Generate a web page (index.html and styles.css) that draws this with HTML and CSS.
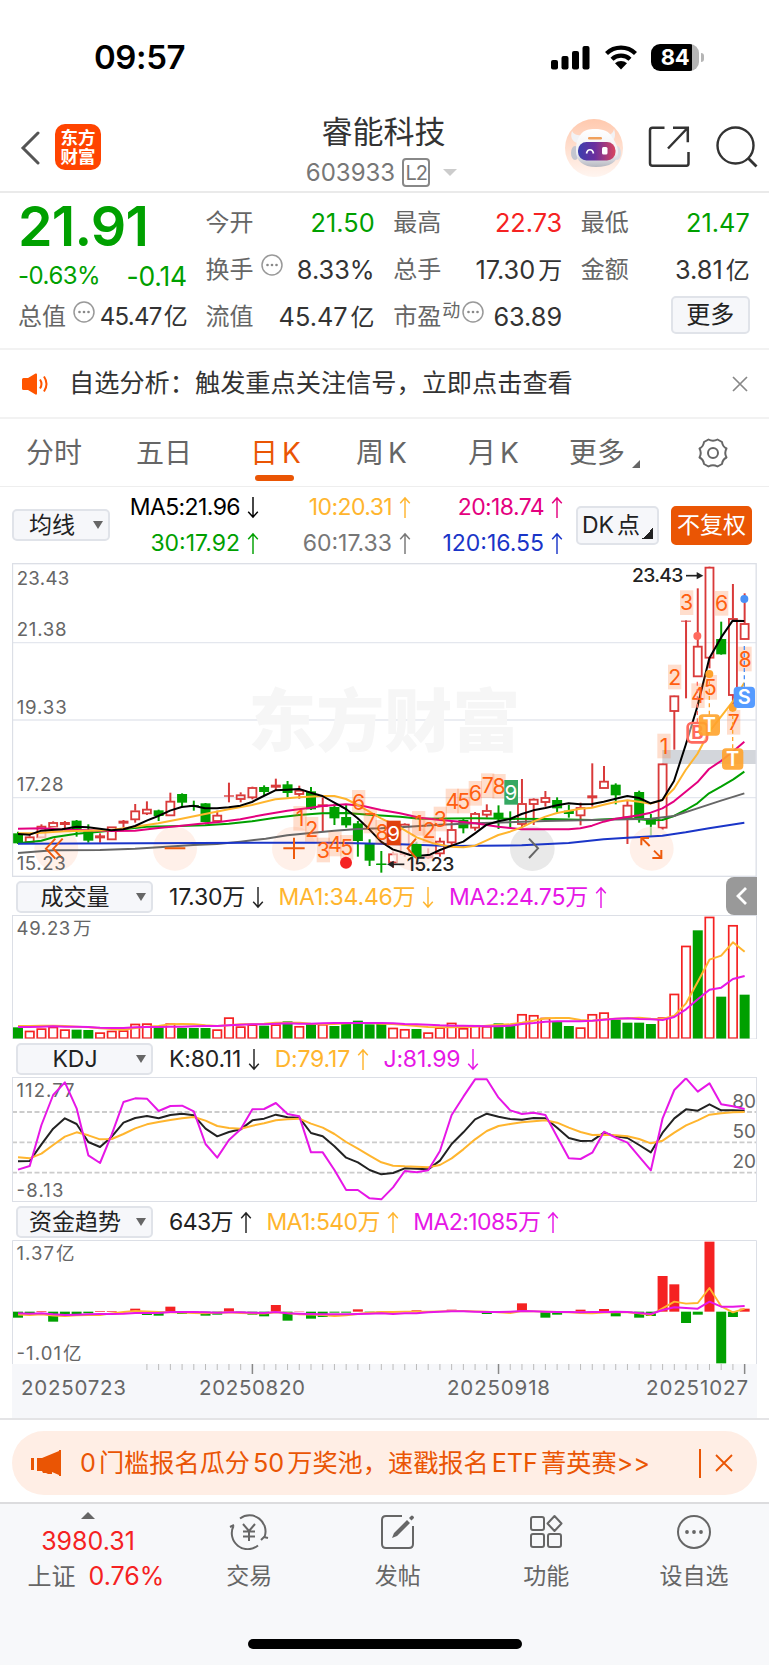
FILE: index.html
```
<!DOCTYPE html>
<html lang="zh-CN">
<head>
  <meta charset="UTF-8" />
  <meta name="viewport" content="width=device-width, initial-scale=1.0" />
  <title>睿能科技 603933</title>
  <link rel="stylesheet" href="styles.css">
</head>
<body>
  <svg class="defs" width="0" height="0">
    <symbol id="up" viewBox="0 0 12 24"><path d="M6 23V2M1 7.500 6 2l5 5.500" fill="none" stroke="currentColor" stroke-width="1.500"/></symbol>
    <symbol id="down" viewBox="0 0 12 24"><path d="M6 1v21M1 16.500 6 22l5-5.500" fill="none" stroke="currentColor" stroke-width="1.500"/></symbol>
    <symbol id="dots" viewBox="0 0 22 22"><circle cx="11" cy="11" r="10" fill="none" stroke="#999" stroke-width="1.500"/><g fill="#888"><circle cx="6.500" cy="11" r="1.300"/><circle cx="11" cy="11" r="1.300"/><circle cx="15.500" cy="11" r="1.300"/></g></symbol>
  </svg>

  <div class="status">
    <span class="time">09:57</span>
    <div class="status-icons">
      <svg width="39" height="25" viewBox="0 0 39 25"><rect x="0" y="15" width="7" height="9.500" rx="2"/><rect x="10.500" y="11" width="7" height="13.500" rx="2"/><rect x="21" y="6" width="7" height="18.500" rx="2"/><rect x="31.500" y="1" width="7" height="23.500" rx="2"/></svg>
      <svg class="wifi" width="34" height="25" viewBox="0 0 34 25"><path d="M2.500 8.500a21 21 0 0 1 29 0M8 14.300a13 13 0 0 1 18 0" fill="none" stroke="#000" stroke-width="4.300"/><path d="M11 18.300a8.700 8.700 0 0 1 12 0l-6 6.200z"/></svg>
      <div class="battery"><span>84</span></div>
      <i class="battery-tip"></i>
    </div>
  </div>

  <header class="nav">
    <svg class="back" width="20" height="34" viewBox="0 0 20 34"><path d="M18 2 3 17l15 15" fill="none" stroke="#555" stroke-width="3" stroke-linecap="round"/></svg>
    <div class="logo"><span>东方</span><span>财富</span></div>
    <div class="title">
      <h1>睿能科技</h1>
      <div class="code"><span>603933</span><b>L2</b><i></i></div>
    </div>
    <svg class="robot" width="58" height="58" viewBox="0 0 58 58">
      <defs>
        <linearGradient id="bg" x1="0" y1="0" x2="0" y2="1"><stop offset="0" stop-color="#ffc9ae"/><stop offset="1" stop-color="#fff5f0"/></linearGradient>
        <linearGradient id="face" x1="0" y1="0" x2="1" y2="0"><stop offset="0" stop-color="#3a3fae"/><stop offset=".45" stop-color="#6a2e9e"/><stop offset="1" stop-color="#d9455e"/></linearGradient>
        <linearGradient id="head" x1="0" y1="0" x2="0" y2="1"><stop offset="0" stop-color="#fff"/><stop offset=".65" stop-color="#efeff2"/><stop offset="1" stop-color="#b5b7c0"/></linearGradient>
      </defs>
      <circle cx="29" cy="29" r="29" fill="url(#bg)"/>
      <ellipse cx="10" cy="34" rx="4" ry="7" fill="#c4c6cf"/><ellipse cx="52" cy="34" rx="4" ry="7" fill="#dcdde3"/>
      <path d="M7 12c-2 6 0 10 5 12l6-8c-5 1-9 0-11-4zM49 10c2 6 1 11-3 13l-6-7c5 0 8-1 9-6z" fill="#f2f2f5"/>
      <path d="M11 32c0-7 1-12 5-17 3-4 8-5 14-5 8 0 14 2 17 8 3 5 6 9 6 15 0 10-8 15-22 15-13 0-20-6-20-16z" fill="url(#head)"/>
      <rect x="23" y="18" width="14" height="2.500" rx="1.200" fill="#f0a05c"/>
      <rect x="13" y="23" width="37.500" height="18.500" rx="8.500" fill="url(#face)"/>
      <path d="M21.500 34.500c1-5 6-5 7 0" fill="none" stroke="#fff" stroke-width="1.700"/><rect x="37" y="28" width="5.500" height="7.500" rx="1.500" fill="#fff"/>
    </svg>
    <svg class="share" width="42" height="42" viewBox="0 0 42 42"><path d="M16.500 1.800H4.500Q2 1.800 2 4.300v33q0 2.500 2.500 2.500h34q2 0 2-2.500V26M25 1.800h14.800v14.500M39.500 2 20 22.500" fill="none" stroke="#333" stroke-width="2.500"/></svg>
    <svg width="42" height="42" viewBox="0 0 42 42"><circle cx="19.500" cy="19.500" r="18" fill="none" stroke="#333" stroke-width="2.400"/><path d="m32 32 8.500 8.500" stroke="#333" stroke-width="2.800"/></svg>
  </header>

  <section class="quote">
    <div class="price">
      <strong class="green">21.91</strong>
      <div class="change green"><span>-0.63%</span><b>-0.14</b></div>
    </div>
    <div class="cell"><label>今开</label><span class="green">21.50</span></div>
    <div class="cell"><label>最高</label><span class="red">22.73</span></div>
    <div class="cell"><label>最低</label><span class="green">21.47</span></div>
    <div class="cell"><label>换手<svg class="info"><use href="#dots"/></svg></label><span>8.33%</span></div>
    <div class="cell"><label>总手</label><span>17.30<em>万</em></span></div>
    <div class="cell"><label>金额</label><span>3.81<em>亿</em></span></div>
    <div class="cell narrow"><label>总值<svg class="info"><use href="#dots"/></svg></label><span>45.47<em>亿</em></span></div>
    <div class="cell"><label>流值</label><span>45.47<em>亿</em></span></div>
    <div class="cell"><label>市盈<sup>动</sup><svg class="info tight"><use href="#dots"/></svg></label><span>63.89</span></div>
    <div class="cell end"><button class="more">更多</button></div>
  </section>

  <div class="notice">
    <svg width="27" height="22" viewBox="0 0 27 22"><path d="M0 6.500Q0 5 1.500 5H6l7.500-4.500Q15 0 15 1.500v19q0 1.500-1.500 1L6 17H1.500Q0 17 0 15.500z" fill="#ff5500"/><path d="M18 6.500q3 4.500 0 9M22 3.500q5 7.500 0 15" fill="none" stroke="#ff5500" stroke-width="2"/></svg>
    <p>自选分析：触发重点关注信号，立即点击查看</p>
    <svg width="16" height="16" viewBox="0 0 16 16"><path d="m1 1 14 14M15 1 1 15" stroke="#888" stroke-width="1.700"/></svg>
  </div>

  <nav class="tabs">
    <span>分时</span>
    <span>五日</span>
    <span class="active">日<b>K</b></span>
    <span>周<b>K</b></span>
    <span>月<b>K</b></span>
    <span class="corner">更多</span>
    <svg width="32" height="32" viewBox="0 0 32 32"><path d="M11.500 2.500Q16 5 20.500 2.500L25 5Q25.500 9.500 29.500 11.500Q27 16 29.500 20.500Q25.500 22.500 25 27L20.500 29.500Q16 27 11.500 29.500L7 27Q6.500 22.500 2.500 20.500Q5 16 2.500 11.500Q6.500 9.500 7 5Z" fill="none" stroke="#666" stroke-width="2" stroke-linejoin="round"/><circle cx="16" cy="16" r="5" fill="none" stroke="#666" stroke-width="2"/></svg>
  </nav>

  <div class="ma-row">
    <button class="select small">均线<i></i></button>
    <div class="ma-grid">
      <span class="black">MA5:21.96<svg><use href="#down"/></svg></span>
      <span class="yellow">10:20.31<svg><use href="#up"/></svg></span>
      <span class="pink">20:18.74<svg><use href="#up"/></svg></span>
      <span class="green wide">30:17.92<svg><use href="#up"/></svg></span>
      <span class="gray wide">60:17.33<svg><use href="#up"/></svg></span>
      <span class="blue wide">120:16.55<svg><use href="#up"/></svg></span>
    </div>
    <button class="dk">DK<em>点</em></button>
    <button class="fq">不复权</button>
  </div>

  <main class="charts">
    <!-- price chart is drawn on a 3x grid -->
    <svg id="kline" class="chart" width="746" height="314" viewBox="36 9 2238 942"></svg>
    <div class="bar">
      <button class="select"><span>成交量</span><i></i></button>
      <span class="dark">17.30万<svg><use href="#down"/></svg></span>
      <span class="yellow">MA1:34.46万<svg><use href="#down"/></svg></span>
      <span class="magenta">MA2:24.75万<svg><use href="#up"/></svg></span>
      <div class="side"><svg width="12" height="20" viewBox="0 0 12 20"><path d="m10 2-8 8 8 8" fill="none" stroke="#fff" stroke-width="2.800"/></svg></div>
    </div>
    <svg id="volume" class="chart" width="746" height="124" viewBox="12 915 746 124"></svg>
    <div class="bar">
      <button class="select"><span>KDJ</span><i></i></button>
      <span class="dark">K:80.11<svg><use href="#down"/></svg></span>
      <span class="yellow">D:79.17<svg><use href="#up"/></svg></span>
      <span class="magenta">J:81.99<svg><use href="#down"/></svg></span>
    </div>
    <svg id="kdj" class="chart" width="746" height="125" viewBox="12 1077 746 125"></svg>
    <div class="bar fund-bar">
      <button class="select"><span>资金趋势</span><i></i></button>
      <span class="dark">643万<svg><use href="#up"/></svg></span>
      <span class="yellow">MA1:540万<svg><use href="#up"/></svg></span>
      <span class="magenta">MA2:1085万<svg><use href="#up"/></svg></span>
    </div>
    <svg id="fund" class="chart" width="746" height="178" viewBox="12 1240 746 178"></svg>
  </main>

  <div class="promo-wrap">
    <div class="promo">
      <svg width="30" height="26" viewBox="0 0 30 26"><path d="M0 8h3v12H0zM6 8h5L28 1V0h2v26h-2v-1l-7-3v2h-3l-1 0-2-1-3 0-1-2H6z" fill="#ea5504"/></svg>
      <p>0<em>门槛报名瓜分</em>50<em>万奖池，速戳报名</em>ETF<em class="last">菁英赛</em>&gt;&gt;</p>
      <i></i>
      <svg width="18" height="18" viewBox="0 0 18 18"><path d="m1 1 16 16M17 1 1 17" stroke="#ea5504" stroke-width="1.800"/></svg>
    </div>
  </div>

  <footer class="toolbar">
    <div class="items">
      <div class="index">
        <i></i>
        <span class="red">3980.31</span>
        <p>上证<b class="red">0.76%</b></p>
      </div>
      <div class="item">
        <svg width="40" height="36" viewBox="0 0 40 36"><g fill="none" stroke="#666" stroke-width="2"><path d="M11 4.500A16 16 0 0 1 35.500 23M32 26l3-3 4 1M29 31.500A16 16 0 0 1 4.500 12M1 13l4-2 0 0"/><path d="m14 10 6 7 6-7M20 17v10M14 17.500h12M14 22.500h12"/></g></svg>
        <span>交易</span>
      </div>
      <div class="item">
        <svg width="40" height="36" viewBox="0 0 40 36"><path d="M24 2H8Q4 2 4 6v24q0 4 4 4h23q4 0 4-4V12" fill="none" stroke="#666" stroke-width="2"/><path d="m29 6 3 3-13 13-5 2 2-5zM31 4l2-2q1-1 2.300.300T35.500 4.600l-2 2z" fill="#666"/></svg>
        <span>发帖</span>
      </div>
      <div class="item">
        <svg width="40" height="36" viewBox="0 0 40 36"><g fill="none" stroke="#666" stroke-width="2"><rect x="5" y="3" width="13" height="13" rx="2"/><rect x="5" y="20" width="13" height="13" rx="2"/><rect x="22" y="20" width="13" height="13" rx="2"/><path d="m28.500 2 7 7.500-7 7.500-7-7.500z" stroke-linejoin="round"/></g></svg>
        <span>功能</span>
      </div>
      <div class="item">
        <svg width="40" height="36" viewBox="0 0 40 36"><circle cx="20" cy="18" r="16" fill="none" stroke="#666" stroke-width="2"/><g fill="#666"><circle cx="13" cy="18" r="1.900"/><circle cx="20" cy="18" r="1.900"/><circle cx="27" cy="18" r="1.900"/></g></svg>
        <span>设自选</span>
      </div>
    </div>
    <div class="home"></div>
  </footer>

  <script src="chart.js"></script>
</body>
</html>
```
FILE: styles.css
```
* {
  box-sizing: border-box;
}
body {
  margin: 0;
  width: 769px;
  height: 1665px;
  overflow: hidden;
  background: #fff;
  color: #333;
  font-family: Inter, "Noto Sans CJK SC", sans-serif;
  line-height: 1;
}
button {
  font-family: inherit;
  padding: 0;
  color: #222;
  background: #f6f7fa;
  border: 2px solid #e0e3e9;
  border-radius: 5px;
}
h1, p {
  margin: 0;
  font-weight: 400;
}
em, i {
  font-style: normal;
}
svg {
  display: block;
  flex: none;
}
.defs {
  position: absolute;
}
.green { color: #00a000; }
.red { color: #f52222; }
.black { color: #000; }
.dark { color: #222; }
.gray { color: #777; }
.yellow { color: #ffb52e; }
.pink { color: #e4007f; }
.blue { color: #1a35c8; }
.magenta { color: #e617e6; }

/* status bar */
.status {
  height: 85px;
  padding: 29px 65px 0 94px;
  display: flex;
  justify-content: space-between;
  align-items: center;
}
.time {
  color: #000;
  font-size: 33px;
  font-weight: 600;
  letter-spacing: -0.4px;
}
.status-icons {
  display: flex;
  align-items: center;
}
.wifi {
  margin: 0 13px 0 14px;
}
.battery {
  width: 48px;
  height: 27px;
  border-radius: 9px;
  background: linear-gradient(90deg, #000 41px, #b5b5b5 41px);
  color: #fff;
  font-size: 22px;
  font-weight: 700;
  line-height: 27px;
  text-align: center;
  letter-spacing: -0.3px;
}
.battery-tip {
  width: 3px;
  height: 9px;
  margin-left: 2px;
  border-radius: 0 4px 4px 0;
  background: #b5b5b5;
}

/* navigation */
.nav {
  height: 108px;
  padding: 0 11px 0 20px;
  display: flex;
  align-items: center;
  border-bottom: 2px solid #eaeaea;
}
.back {
  margin-top: 19px;
}
.logo {
  width: 46px;
  height: 46px;
  margin: 18px 0 0 15px;
  border-radius: 10px;
  background: #ff4400;
  color: #fff;
  font-size: 17.5px;
  font-weight: 700;
  display: flex;
  flex-direction: column;
  align-items: center;
  justify-content: center;
  gap: 2px;
}
.title {
  flex: 1;
  padding: 27px 0 0 101px;
  display: flex;
  flex-direction: column;
  align-items: center;
}
.title h1 {
  font-size: 31px;
  line-height: 40px;
}
.code {
  height: 38px;
  display: flex;
  align-items: center;
  color: #777;
  font-size: 24px;
  margin-top: 2px;
  margin-left: -4px;
}
.code b {
  width: 28px;
  height: 29px;
  margin: 0 13px 0 7px;
  border: 2px solid #888;
  border-radius: 4px;
  font-size: 20px;
  font-weight: 400;
  line-height: 26px;
  text-align: center;
  letter-spacing: -1px;
}
.code i {
  border: 7px solid transparent;
  border-top-color: #ccc;
  border-bottom: 0;
}
.robot {
  margin: 19px 25px 0 0;
}
.share, .share + svg {
  margin-top: 18px;
}
.share {
  margin-right: 26px;
}

/* quote */
.quote {
  height: 157px;
  padding: 6px 19px 0 18px;
  display: grid;
  grid-template-columns: repeat(4, 169px);
  grid-template-rows: repeat(3, 47px);
  column-gap: 18.600px;
  border-bottom: 2px solid #f2f2f2;
}
.price {
  grid-row: span 2;
}
.price strong {
  display: block;
  font-size: 55.5px;
  font-weight: 600;
  line-height: 54px;
  letter-spacing: -0.8px;
}
.change {
  display: flex;
  justify-content: space-between;
  margin-top: 5px;
  font-size: 24px;
  line-height: 36px;
  letter-spacing: -0.5px;
}
.change b {
  font-size: 26.5px;
  font-weight: 400;
  letter-spacing: -0.2px;
}
.cell {
  display: flex;
  justify-content: space-between;
  align-items: center;
  white-space: nowrap;
  font-size: 25.3px;
}
.cell label {
  display: flex;
  align-items: center;
  color: #666;
  font-size: 24px;
  letter-spacing: 0;
}
.cell em {
  margin-left: 3px;
  font-size: 24px;
}
.narrow {
  font-size: 24px;
  letter-spacing: -0.7px;
}
.narrow em {
  margin-left: 2px;
}
.cell sup {
  font-size: 18px;
  margin: -12px 0 0 1px;
}
.info {
  width: 22px;
  height: 22px;
  margin: -10px 0 0 7px;
}
.info.tight {
  margin-left: 2px;
}
.end {
  justify-content: flex-end;
}
.more {
  width: 79px;
  height: 38px;
  margin-top: -3px;
  font-size: 24px;
  line-height: 30px;
}

/* notice */
.notice {
  height: 69px;
  padding: 0 21px 0 22px;
  display: flex;
  align-items: center;
  border-bottom: 2px solid #f2f2f2;
}
.notice p {
  flex: 1;
  padding-left: 20px;
  font-size: 25.2px;
}

/* period tabs */
.tabs {
  height: 68px;
  padding-left: 26px;
  display: grid;
  grid-template-columns: 110px 114px 106px 112px 101px 128px 32px;
  align-items: center;
  border-bottom: 1px solid #eee;
  color: #666;
  font-size: 28px;
}
.tabs b {
  font-weight: 400;
  margin-left: 4px;
}
.active {
  position: relative;
  color: #ea5504;
}
.active::after {
  content: "";
  position: absolute;
  left: 5px;
  bottom: -14px;
  width: 39px;
  height: 6px;
  border-radius: 3px;
  background: #ea5504;
}
.corner {
  display: flex;
  align-items: flex-end;
}
.corner::after {
  content: "";
  margin: 0 0 -1px 7px;
  border: 4px solid;
  border-color: transparent #666 #666 transparent;
}

/* moving averages */
.ma-row {
  height: 76px;
  padding-left: 12px;
  display: flex;
  align-items: center;
}
.select {
  width: 137px;
  height: 32px;
  padding: 0 5px 0 10px;
  display: flex;
  align-items: center;
  font-size: 23px;
  line-height: 28px;
}
.select i {
  margin-left: auto;
  border: 5px solid transparent;
  border-top: 8px solid #666;
  border-bottom: 0;
}
.select.small {
  width: 98px;
  padding-left: 15px;
}
.ma-grid {
  width: 453px;
  display: grid;
  grid-template-columns: 149px 152px 152px;
  row-gap: 13px;
  font-size: 23px;
  letter-spacing: -0.6px;
}
.ma-grid .wide {
  letter-spacing: 0;
}
.ma-grid span {
  display: flex;
  justify-content: flex-end;
  align-items: center;
}
.ma-grid svg, .bar > span svg {
  width: 12px;
  height: 23px;
  margin-left: 7px;
}
.dk, .fq {
  height: 39px;
  font-size: 23px;
  line-height: 30px;
}
.dk {
  width: 83px;
  margin-left: 13px;
  padding-right: 13px;
  background: linear-gradient(135deg, transparent 50%, #222 50%) right 4px bottom 4px / 11px 11px no-repeat #f6f7fa;
}
.dk em {
  margin-left: 3px;
}
.fq {
  width: 81px;
  margin-left: 12px;
  background: #ea5504;
  border-color: #ea5504;
  color: #fff;
}

/* charts */
.charts {
  padding-left: 12px;
}
.chart text {
  white-space: pre;
}
.bar {
  height: 38px;
  padding: 2px 0 0 4px;
  display: flex;
  align-items: center;
  width: 745px;
  font-size: 23px;
}
.bar .select {
  margin-right: 16px;
}
.select span {
  width: 94px;
  text-align: center;
}
.bar > span {
  display: flex;
  align-items: center;
  margin-right: 14.500px;
  letter-spacing: -0.2px;
}
.fund-bar > span {
  letter-spacing: -0.6px;
}
.side {
  width: 31px;
  height: 38px;
  margin: -2px 0 0 auto;
  border-radius: 8px 0 0 8px;
  background: #999;
  display: flex;
  align-items: center;
  justify-content: center;
}

/* promo */
.promo-wrap {
  height: 86px;
  padding: 11px 12px 0;
  border-top: 2px solid #e4e4e6;
  border-bottom: 2px solid #dcdcde;
}
.promo {
  height: 64px;
  padding: 0 24px 0 19px;
  border-radius: 32px;
  background: #ffeee5;
  color: #ea5504;
  display: flex;
  align-items: center;
}
.promo p {
  flex: 1;
  padding: 1px 0 0 19px;
  font-size: 25.2px;
  white-space: nowrap;
}
.promo em {
  margin: 0 3px;
}
.promo .last {
  margin-right: 0;
}
.promo i {
  width: 2px;
  height: 29px;
  margin-right: 14px;
  background: #ea5504;
}

/* bottom toolbar */
.toolbar {
  height: 161px;
  padding-top: 6px;
  background: #f7f8fa;
}
.items {
  height: 129px;
  display: grid;
  grid-template-columns: 175px 148.500px 148.500px 148.500px 147px;
  color: #666;
  font-size: 23px;
}
.item {
  padding-top: 4px;
  display: flex;
  flex-direction: column;
  align-items: center;
  gap: 15px;
}
.index {
  padding: 2px 0 0 17px;
  display: flex;
  flex-direction: column;
  align-items: center;
  white-space: nowrap;
  width: 175px;
}
.index i {
  border: 7px solid transparent;
  border-bottom-color: #666;
  border-top: 0;
}
.index span {
  margin: 10px 0 10px -16px;
  font-size: 25px;
}
.index > i {
  margin-left: -16px;
}
.index p {
  font-size: 24px;
}
.index b {
  margin-left: 13px;
  font-size: 25px;
  font-weight: 400;
}
.home {
  width: 274px;
  height: 10px;
  margin-left: 248px;
  border-radius: 5px;
  background: #000;
}
```
FILE: chart.js
```
const N = 63;
const STEP = 11.72;
const RED = '#d93a3a';
const GREEN = '#00a000';
const FONT = 'Inter, "Noto Sans CJK SC", sans-serif';

function draw(id, html) {
  document.getElementById(id).innerHTML = html;
}
function line(pts, color, w) {
  return `<polyline points="${pts.map(p => p.join(',')).join(' ')}" fill="none" stroke="${color}" stroke-width="${w}" stroke-linejoin="round"/>`;
}
function seg(x1, y1, x2, y2, color, w, extra = '') {
  return `<line x1="${x1}" y1="${y1}" x2="${x2}" y2="${y2}" stroke="${color}" stroke-width="${w}" ${extra}/>`;
}
function rect(x, y, w, h, fill, extra = '') {
  return `<rect x="${x}" y="${y}" width="${w}" height="${h}" fill="${fill}" ${extra}/>`;
}
function text(x, y, s, size, color, extra = '') {
  return `<text x="${x}" y="${y}" font-size="${size}" fill="${color}" font-family='${FONT}' ${extra}>${s}</text>`;
}
const px = i => 18 + i * STEP;
const pairs = a => a.match(/\S+/g).map(p => p.split(',').map(Number));

// ---- price ----
// type (g green, h hollow red, r solid red), body top, body bottom, high, low
const candles = [
  ['g',820,850,815,852],['h',830,846,825,847],['h',798,832,793,833],['h',787,801,784,806],['r',786,795,783,805],
  ['g',782,808,780,830],['g',812,842,793,848],['r',826,835,820,848],['h',800,838,800,838],['r',782,791,780,803],
  ['h',752,778,732,788],['h',747,760,724,765],['g',751,768,749,783],['h',723,766,698,768],['g',702,728,700,742],
  ['g',735,739,722,752],['g',730,786,729,787],['h',765,783,752,785],['r',706,710,668,727],['h',704,717,697,727],
  ['h',682,712,680,718],['g',681,696,676,706],['r',674,683,656,692],['g',673,699,663,712],['h',690,702,677,716],
  ['g',694,748,681,750],['r',733,741,712,814],['g',741,775,733,795],['g',771,796,735,803],['g',790,843,783,890],
  ['g',849,902,838,918],['g',911,915,873,938],['h',881,907,875,923],['h',792,882,790,890],['g',852,890,845,892],
  ['r',885,895,865,897],['h',843,880,833,890],['h',808,847,783,858],['g',780,805,777,820],['h',760,803,756,812],
  ['h',751,764,733,773],['g',758,776,736,807],['g',776,780,754,802],['h',730,792,657,802],['h',717,732,715,795],
  ['h',712,726,693,740],['g',720,745,712,757],['g',752,762,735,773],['h',742,766,728,796],['r',706,715,610,740],
  ['h',663,684,618,685],['g',674,706,670,733],['h',735,772,723,852],['g',696,780,692,788],['g',776,794,762,827],
  ['h',611,803,610,809],['h',407,453,406,569],['r',182,185,181,415],['h',258,349,85,350],['h',21,293,20,325],
  ['g',237,283,185,284],['h',175,405,72,440],['h',190,237,100,238]
];
const ma = {
  '#00a000': '54,850 124,842 160,832 230,821 300,815 370,808 440,800 510,799 615,796 686,791 756,784 826,773 897,765 967,760 1038,759 1108,764 1200,770 1260,776 1425,775 1636,777 1776,780 1882,775 1952,781 1987,780 2022,768 2057,750 2092,730 2127,700 2163,680 2200,658 2233,635',
  '#666': '54,879 160,871 300,870 405,866 500,860 580,855 651,852 721,845 797,836 862,826 932,819 1003,812 1073,807 1143,805 1200,802 1320,794 1425,790 1636,783 1776,780 1882,778 1952,776 2022,768 2092,745 2163,722 2233,700',
  '#1a35c8': '54,851 600,849 1000,848 1200,853 1350,858 1565,856 1706,849 1811,838 1882,833 1987,827 2057,817 2127,805 2233,788',
  '#e4007f': '54,806 124,805 194,809 264,811 334,813 405,812 475,804 545,797 615,790 651,787 721,778 791,764 862,752 932,743 967,738 1038,733 1090,738 1143,750 1200,760 1260,773 1320,780 1390,786 1425,790 1495,800 1565,808 1636,808 1706,808 1741,805 1776,797 1811,785 1847,776 1917,766 1952,758 1987,745 2022,724 2057,695 2092,667 2127,627 2163,603 2198,575 2233,545',
  '#ffb52e': '54,820 100,820 194,814 264,812 334,810 405,800 475,790 545,776 615,762 686,748 756,735 826,718 897,712 967,708 1003,708 1038,717 1073,735 1108,755 1143,775 1200,802 1250,832 1300,850 1350,860 1390,862 1425,857 1460,841 1495,825 1530,815 1565,802 1600,785 1636,770 1671,759 1741,746 1776,743 1811,734 1847,726 1882,721 1917,725 1952,731 1987,720 2022,686 2057,630 2092,582 2128,515 2163,470 2198,425 2233,368',
  '#000': '54,822 89,824 124,812 186,808 230,800 264,802 334,811 370,808 405,798 440,782 475,768 510,752 545,741 580,737 615,745 651,745 686,742 721,737 756,726 791,708 826,691 862,689 897,687 932,698 967,708 1003,728 1038,747 1073,775 1108,808 1143,845 1178,868 1200,875 1230,885 1260,887 1290,884 1320,870 1355,857 1390,845 1425,820 1460,794 1495,784 1530,777 1565,762 1600,751 1636,744 1671,736 1706,730 1741,733 1776,732 1811,725 1847,716 1882,708 1917,714 1952,730 1987,720 2022,663 2057,555 2092,440 2128,295 2163,233 2198,182 2233,183'
};
const signals = [
  [1,900,775],[2,935,808],[3,970,870],[4,1005,852],[5,1040,862],[6,1076,727],[7,1111,783],[8,1146,817],
  [1,1256,790],[2,1288,812],[3,1321,777],[4,1357,723],[5,1391,723],[6,1426,700],[7,1463,677],[8,1497,679],
  [1,1992,558],[2,2024,351],[3,2060,128],[4,2094,407],[5,2131,382],[6,2165,130],[7,2201,487],[8,2235,297]
];

function kline() {
  const X = i => 54 + i * STEP * 3;
  let s = '';
  [248, 480, 713].forEach(y => s += seg(36, y, 2268, y, '#e4e7ee', 4));
  s += text(745, 559, '东方财富', 204, '#f6f6f6', 'font-weight="900" textLength="816"');
  s += rect(1987, 570, 282, 42, '#d3d6db');
  candles.forEach(([t, top, bot, hi, lo], i) => {
    const x = X(i);
    const c = t === 'g' ? GREEN : RED;
    if (t === 'h') {
      s += seg(x, hi, x, top, c, 6) + seg(x, bot, x, lo, c, 6);
      s += rect(x - 12, top + 2, 24, bot - top - 2, 'none', `stroke="${c}" stroke-width="5.500"`);
    } else {
      s += seg(x, hi, x, lo, c, 6) + rect(x - 15, top, 30, bot - top, c);
    }
  });
  // overlay buttons
  [169, 525, 882, 1240, 1955].forEach(x => s += `<circle cx="${x}" cy="866" r="66" fill="#ffe9df" fill-opacity=".7"/>`);
  s += '<circle cx="1597" cy="866" r="67" fill="#e9e9e9"/>';
  for (const c in ma) s += line(pairs(ma[c]), c, 6);
  candles.forEach(([t, top, bot], i) => {
    if (i > 30 && i < 37 && t === 'g') s += rect(X(i) - 15, top, 30, bot - top, GREEN);
  });
  const icon = (d, c) => `<path d="${d}" fill="none" stroke="${c}" stroke-width="6"/>`;
  s += icon('M166 836l-28 30 28 30M188 836l-28 30 28 30M494 865h62M850 865h64M882 833v64M1248 836l-25 29 25 29', '#ee5a0c');
  s += icon('M1587 836l27 29-27 29', '#666');
  s += icon('M1949 858l-23-23M1924 856v-22h23M1962 872l21 21M1984 870v24h-27', '#ee5a0c');

  signals.forEach(([n, x, y]) => {
    s += rect(x - 20, y - 37, 40, 74, '#ff6a1a', 'fill-opacity=".22"');
    s += text(x, y + 23, n, 64, '#ff5f10', 'text-anchor="middle"');
  });
  s += rect(1160, 782, 42, 74, '#e0400c') + text(1181, 842, 9, 62, '#fff', 'text-anchor="middle"');
  s += rect(1513, 660, 41, 74, '#35a862') + text(1533, 719, 9, 62, '#fff', 'text-anchor="middle"');
  s += '<circle cx="1038" cy="908" r="18" fill="#f52222"/>';

  // trade marks
  const mark = (x, dot, y, l, c) => {
    return seg(x, dot, x, y, c, 4, 'stroke-dasharray="12 10"') + `<circle cx="${x}" cy="${dot}" r="12" fill="${c}"/>` +
      rect(x - 32, y - 32, 64, 64, c, 'rx="12" fill-opacity=".9"') + text(x, y + 21, l, 60, '#fff', 'text-anchor="middle" font-weight="600"');
  };
  s += seg(2092, 365, 2092, 500, '#ff6a5e', 4, 'stroke-dasharray="12 10"') + '<circle cx="2092" cy="228" r="12" fill="#ff6a5e"/>';
  s += rect(2063, 489, 58, 58, '#fff', 'fill-opacity=".5" stroke="#ff6a5e" stroke-width="8" rx="12"') + text(2092, 538, 'B', 56, '#ff6a5e', 'text-anchor="middle" font-weight="700"');
  s += mark(2128, 342, 495, 'T', '#ffa32b') + mark(2198, 443, 597, 'T', '#ffa32b');
  s += seg(2233, 258, 2233, 380, '#4a90f5', 4, 'stroke-dasharray="12 10"') + '<circle cx="2233" cy="117" r="12" fill="#4a90f5"/>';
  s += rect(2201, 380, 64, 64, '#559bff', 'rx="12"') + text(2233, 433, 'S', 60, '#fff', 'text-anchor="middle" font-weight="600"');

  // scale
  [['23.43', 75, 158], ['21.38', 227, 150], ['19.33', 461, 150], ['17.28', 694, 141], ['15.23', 929, 147]].forEach(([v, y, w]) => {
    s += text(50, y, v, 56, '#666', `textLength="${w}"`);
  });
  s += text(1896, 67, '23.43', 58, '#222', 'textLength="154" font-weight="500"') + seg(2058, 47, 2096, 47, '#222', 5) + '<path d="M2090 36l20 11-20 11z" fill="#222"/>';
  s += text(1220, 933, '15.23', 58, '#222', 'textLength="143" font-weight="500"') + seg(1175, 913, 1213, 913, '#222', 5) + '<path d="M1181 902l-20 11 20 11z" fill="#222"/>';
  s += rect(37.5, 11, 2231, 938, 'none', 'stroke="#dcdfe6" stroke-width="4"');
  draw('kline', s);
}

// ---- volume ----
function volume() {
  const tops = [472,482,475,470,478,479,480,487,482,481,461,460,470,460,474,474,474,478,442,469,463,467,463,454,468,461,462,468,462,452,463,462,473,477,477,487,472,458,474,465,468,460,466,432,435,443,455,468,472,432,427,449,458,458,462,442,371,227,181,140,380,165,374];
  const type = 'grrrrggrrrrrgrgggrrrrgrgrgrgggggrrgrrrrrrggrrrggrrrggggrrrgrgrg';
  const m1 = [468,468,467,467,468,470,472,475,477,479,474,470,468,463,462,463,466,468,466,463,462,461,458,458,458,461,463,462,460,459,459,461,462,465,468,471,472,472,471,470,467,464,463,458,452,445,444,444,450,452,448,446,445,443,446,447,437,400,335,269,257,217,245];
  const m2 = [471,471,470,469,470,470,471,473,474,474,472,471,471,470,470,469,468,468,466,464,463,463,461,460,461,461,460,459,459,459,459,459,460,462,463,464,466,467,467,468,469,469,467,462,459,455,454,454,454,452,449,446,445,447,448,450,441,418,388,359,353,327,318];
  const Y = v => 870 + v / 3;
  let s = '';
  tops.forEach((t, i) => {
    s += type[i] === 'g'
      ? rect(px(i) - 5, Y(t), 10, 1039 - Y(t), GREEN)
      : rect(px(i) - 4.2, Y(t) + .8, 8.4, 1038.200 - Y(t) - .8, '#fff', 'stroke="#f52222" stroke-width="1.700"');
  });
  s += line(m1.map((v, i) => [px(i), Y(v)]), '#ffb52e', 2) + line(m2.map((v, i) => [px(i), Y(v)]), '#e617e6', 2);
  s += text(16.5, 935, '49.23<tspan dx="2">万</tspan>', 18.5, '#666', 'textLength="75"');
  s += rect(12.5, 915.5, 744, 123.500, 'none', 'stroke="#dcdfe6"');
  draw('volume', s);
}

// ---- KDJ ----
function kdj() {
  const j = [389,378,255,165,127,205,346,369,283,186,175,176,213,198,197,214,312,353,300,268,208,207,189,222,229,337,337,390,450,450,475,478,442,393,397,391,333,225,170,118,118,173,211,222,218,225,290,355,357,338,275,293,308,350,391,235,150,115,155,130,193,199,207];
  const k = [364,363,313,266,235,252,306,321,290,248,234,228,235,225,221,226,266,289,276,268,241,236,224,232,233,279,289,319,353,367,390,403,399,385,386,388,362,312,277,238,221,230,237,239,234,235,263,294,303,302,278,289,294,315,337,278,235,208,212,193,211,211,212];
  const d = [352,355,341,315,290,277,286,298,297,282,265,253,246,240,235,231,242,258,264,266,257,250,241,238,236,251,263,282,306,326,347,367,377,379,380,382,375,355,328,298,273,258,252,247,244,241,248,263,276,285,284,286,289,297,310,302,278,256,241,224,220,217,216];
  const Y = v => 1040 + v / 3;
  const pts = a => a.map((v, i) => [px(i), Y(v)]);
  let s = '';
  [216, 307, 398].forEach(v => s += seg(12, Y(v), 757, Y(v), '#ccc', 1.8, 'stroke-dasharray="5 2.500"'));
  s += text(16.5, 1097, '112.77', 18.5, '#666', 'textLength="58"') + text(16.5, 1197, '-8.13', 18.5, '#666', 'textLength="47"');
  [['80', 1107.5], ['50', 1138], ['20', 1168]].forEach(([v, y]) => s += text(756, y, v, 19, '#666', 'text-anchor="end"'));
  s += line(pts(k), '#222', 2) + line(pts(d), '#ffb52e', 2) + line(pts(j), '#e617e6', 2);
  s += rect(12.5, 1077.5, 744, 124, 'none', 'stroke="#dcdfe6"');
  draw('kdj', s);
}

// ---- fund flow ----
function fund() {
  const v = [338,325,318,350,327,327,325,318,318,320,311,330,332,305,327,323,332,329,310,322,329,334,300,347,319,341,336,323,323,313,322,322,321,321,316,322,321,314,320,320,327,321,321,295,321,338,329,321,314,321,312,334,321,338,333,213,238,354,329,110,475,336,311];
  const m1 = [329,330,328,332,333,331,330,330,325,321,318,319,321,322,323,324,325,323,322,324,325,326,322,324,328,329,330,333,331,327,323,321,321,320,320,320,319,318,318,319,320,322,324,318,319,320,321,322,324,325,323,322,322,325,330,310,290,296,294,249,304,322,311];
  const m2 = [325,326,325,328,330,329,328,327,327,326,324,324,324,321,321,321,322,323,322,322,323,324,321,325,326,327,328,328,328,327,326,325,327,325,325,322,320,319,319,320,321,321,320,318,319,320,321,321,322,321,321,320,321,324,327,315,307,309,311,290,305,305,303];
  const Y = n => 1205 + n / 3;
  let s = rect(12, 1364, 745, 54, '#f6f7fa');
  v.forEach((n, i) => {
    s += rect(px(i) - 5, Y(Math.min(n, 320)), 10, Math.abs(n - 320) / 3, n > 320 ? GREEN : '#f52222');
  });
  s += line(m1.map((n, i) => [px(i), Y(n)]), '#ffb52e', 1.9) + line(m2.map((n, i) => [px(i), Y(n)]), '#e617e6', 2);
  s += text(16.5, 1260, '1.37<tspan dx="1">亿</tspan>', 18.5, '#666', 'textLength="58"');
  s += text(16.5, 1360, '-1.01<tspan dx="1">亿</tspan>', 18.5, '#666', 'textLength="65"');
  s += '<path d="M12.500 1364V1240.500H756.500V1364" fill="none" stroke="#dcdfe6"/>';
  for (let i = 11; i < N; i++) {
    const long = [20, 41, 62].includes(i);
    s += seg(px(i), 1364, px(i), long ? 1374 : 1370, long ? '#888' : '#bbb', long ? 1.5 : 1);
  }
  [['20250723', 21, 105], ['20250820', 199, 106], ['20250918', 447, 103], ['20251027', 646, 102]].forEach(([t, x, w]) => {
    s += text(x, 1395, t, 20.5, '#666', `textLength="${w}"`);
  });
  draw('fund', s);
}

kline();
volume();
kdj();
fund();
```
